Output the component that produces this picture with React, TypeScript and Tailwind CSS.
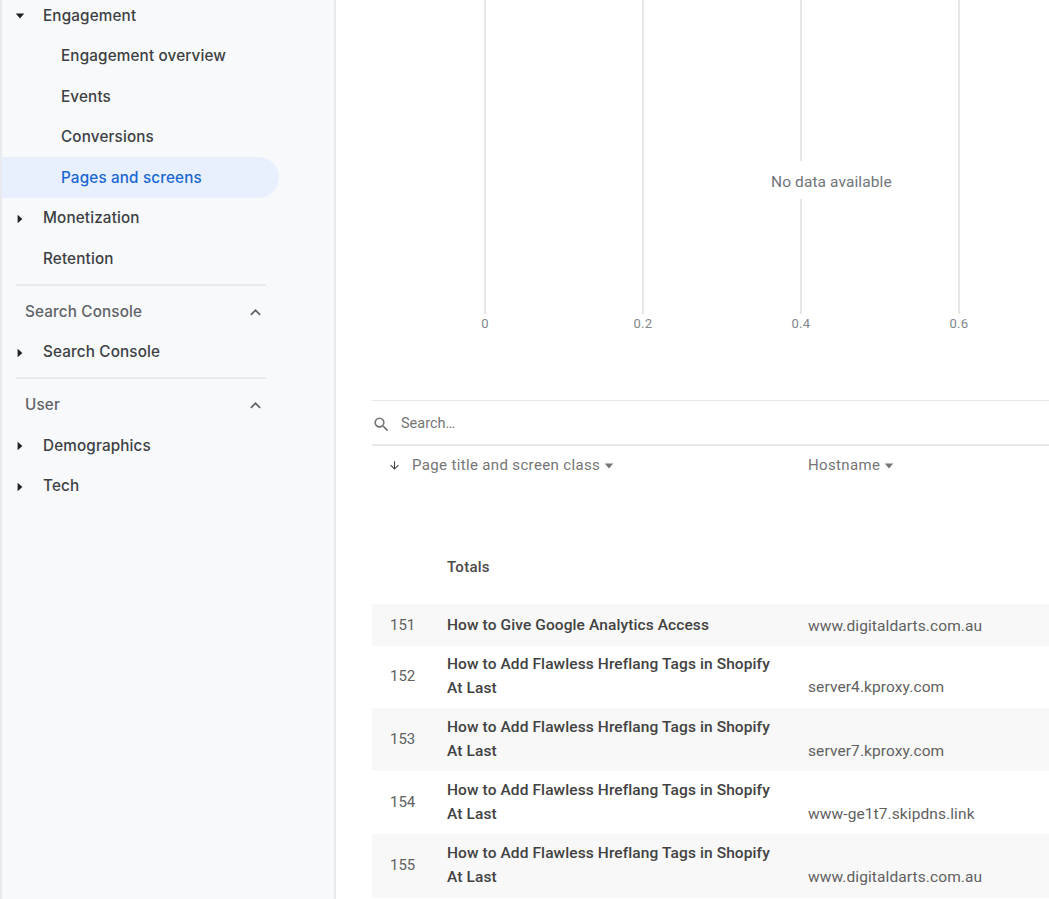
const navFont = "font-['Inter',sans-serif]"

function Caret({ open = false, className = '' }: { open?: boolean; className?: string }) {
  return (
    <svg viewBox="0 0 10 10" className={`h-3 w-3 ${className}`} fill="currentColor">
      {open ? <path d="M1.5 3h7L5 7z" /> : <path d="M3 1.5v7L7 5z" />}
    </svg>
  )
}

function NavItem({ label, caret, open }: { label: string; caret?: boolean; open?: boolean }) {
  return (
    <div className="flex h-[40.5px] items-center pt-[1px] text-[#3c4043]">
      <div className="flex w-[41px] justify-end pr-[17px]">
        {caret && <Caret open={open} className="text-[#202124]" />}
      </div>
      <span className="text-[15.25px] font-[470] tracking-[0.15px]">{label}</span>
    </div>
  )
}

function SubItem({ label, active }: { label: string; active?: boolean }) {
  return (
    <div
      className={`flex h-[40.5px] w-[277px] items-center rounded-r-full pl-[59px] pt-[1px] text-[15.25px] font-[470] tracking-[0.15px] ${
        active ? 'bg-[#e8f0fe] text-[#1967d2]' : 'text-[#3c4043]'
      }`}
    >
      {label}
    </div>
  )
}

function SectionHead({ label, height }: { label: string; height: string }) {
  return (
    <div className="ml-[14px] w-[250px] border-t-2 border-[#e8eaed]">
      <div className={`flex items-center justify-between pl-[9px] text-[#5f6368] ${height}`}>
        <span className="text-[15.25px] font-[470] tracking-[0.15px]">{label}</span>
        <svg viewBox="0 0 24 24" className="h-[21px] w-[21px]" fill="currentColor">
          <path d="M7.41 15.41 12 10.83l4.59 4.58L18 14l-6-6-6 6z" />
        </svg>
      </div>
    </div>
  )
}

function Sidebar() {
  return (
    <aside className={`h-[899px] w-[336px] shrink-0 overflow-hidden border-x-2 border-x-[#e8eaed] bg-[#f8f9fa] ${navFont}`}>
      <div className="-mt-[4.6px]">
        <NavItem label="Engagement" caret open />
        <SubItem label="Engagement overview" />
        <SubItem label="Events" />
        <SubItem label="Conversions" />
        <SubItem label="Pages and screens" active />
        <NavItem label="Monetization" caret />
        <NavItem label="Retention" />
        <div className="mt-[5px]">
          <SectionHead label="Search Console" height="h-[54px]" />
        </div>
        <div className="-mt-[8px]">
          <NavItem label="Search Console" caret />
        </div>
        <div className="mt-[5px]">
          <SectionHead label="User" height="h-[53px]" />
        </div>
        <div className="-mt-[7px]">
          <NavItem label="Demographics" caret />
          <NavItem label="Tech" caret />
        </div>
      </div>
    </aside>
  )
}

const ticks = [
  { label: '0', x: 112 },
  { label: '0.2', x: 270 },
  { label: '0.4', x: 428 },
  { label: '0.6', x: 586 },
]

function Chart() {
  return (
    <div className="relative h-[400px] w-full">
      {ticks.map((t) => (
        <div key={t.label}>
          <div className="absolute top-0 h-[314px] w-[2px] bg-[#e6e6e6]" style={{ left: t.x }} />
          <div
            className="absolute top-[314px] w-10 -translate-x-1/2 text-center text-[13px] tracking-[0.3px] text-[#80868b]"
            style={{ left: t.x + 1 }}
          >
            {t.label}
          </div>
        </div>
      ))}
      <div className="absolute left-[395px] top-[161px] bg-white px-1 pb-[5px] pt-[9px] text-[15.5px] leading-[24px] tracking-[0.1px] text-[#70757a]">
        No data available
      </div>
    </div>
  )
}

const rows = [
  { n: 151, title: ['How to Give Google Analytics Access'], host: 'www.digitaldarts.com.au', h: 'h-[42px]', hostPb: 'pb-[8px]' },
  { n: 152, title: ['How to Add Flawless Hreflang Tags in Shopify', 'At Last'], host: 'server4.kproxy.com', h: 'h-[62px] pb-[2px]', hostPb: 'pb-[7px]' },
  { n: 153, title: ['How to Add Flawless Hreflang Tags in Shopify', 'At Last'], host: 'server7.kproxy.com', h: 'h-[63px] pb-[1px]', hostPb: 'pb-[7px]' },
  { n: 154, title: ['How to Add Flawless Hreflang Tags in Shopify', 'At Last'], host: 'www-ge1t7.skipdns.link', h: 'h-[63px] pb-[1px]', hostPb: 'pb-[7px]' },
  { n: 155, title: ['How to Add Flawless Hreflang Tags in Shopify', 'At Last'], host: 'www.digitaldarts.com.au', h: 'h-[64px] pb-[2px]', hostPb: 'pb-[7px]' },
]

function Table() {
  return (
    <div>
      <div className="flex h-[46px] items-center gap-[10px] border-y border-[#e8e8e8] border-b-2 pt-[3px] text-[#757575]">
        <svg viewBox="0 0 24 24" className="h-[19px] w-[19px]" fill="currentColor">
          <path d="M15.5 14h-.79l-.28-.27A6.471 6.471 0 0 0 16 9.5 6.5 6.5 0 1 0 9.5 16c1.61 0 3.09-.59 4.23-1.57l.27.28v.79l5 4.99L20.49 19l-4.99-5zm-6 0C7.01 14 5 11.99 5 9.5S7.01 5 9.5 5 14 7.01 14 9.5 11.99 14 9.5 14z" />
        </svg>
        <span className="text-[14.5px]">Search…</span>
      </div>
      <div className="flex h-[39px] items-center text-[#757575]">
        <div className="flex w-[40px] justify-end pr-[11px]">
          <svg viewBox="0 0 24 24" className="h-[13px] w-[13px] text-[#424242]" fill="currentColor">
            <path d="M20 12l-1.41-1.41L13 16.17V4h-2v12.17l-5.58-5.59L4 12l8 8 8-8z" />
          </svg>
        </div>
        <div className="flex w-[396px] items-center gap-[3px] text-[15px] tracking-[0.35px]">
          Page title and screen class <Caret open />
        </div>
        <div className="flex items-center gap-[3px] text-[15px] tracking-[0.35px]">
          Hostname <Caret open />
        </div>
      </div>
      <div className="flex h-[119px] items-center pl-[75px] pt-[45px] text-[15px] font-medium tracking-[0.25px] text-[#4a4a4a]">
        Totals
      </div>
      {rows.map((r, i) => (
        <div key={r.n} className={`flex items-center ${r.h} ${i % 2 === 0 ? 'bg-[#f8f8f8]' : 'bg-white'}`}>
          <div className="w-[75px] pl-[18px] text-[15px] text-[#616161]">{r.n}</div>
          <div className="w-[361px] text-[15.5px] font-medium leading-[24px] tracking-[0.1px] text-[#424242]">
            {r.title.map((line) => (
              <div key={line}>{line}</div>
            ))}
          </div>
          <div className={`self-end text-[15.5px] leading-[24px] tracking-[0.1px] text-[#616161] ${r.hostPb}`}>{r.host}</div>
        </div>
      ))}
    </div>
  )
}

export default function App() {
  return (
    <div className="flex h-[899px] w-full overflow-hidden bg-white font-['Roboto',sans-serif]">
      <Sidebar />
      <main className="min-w-0 flex-1 pl-[36px]">
        <Chart />
        <Table />
      </main>
    </div>
  )
}
